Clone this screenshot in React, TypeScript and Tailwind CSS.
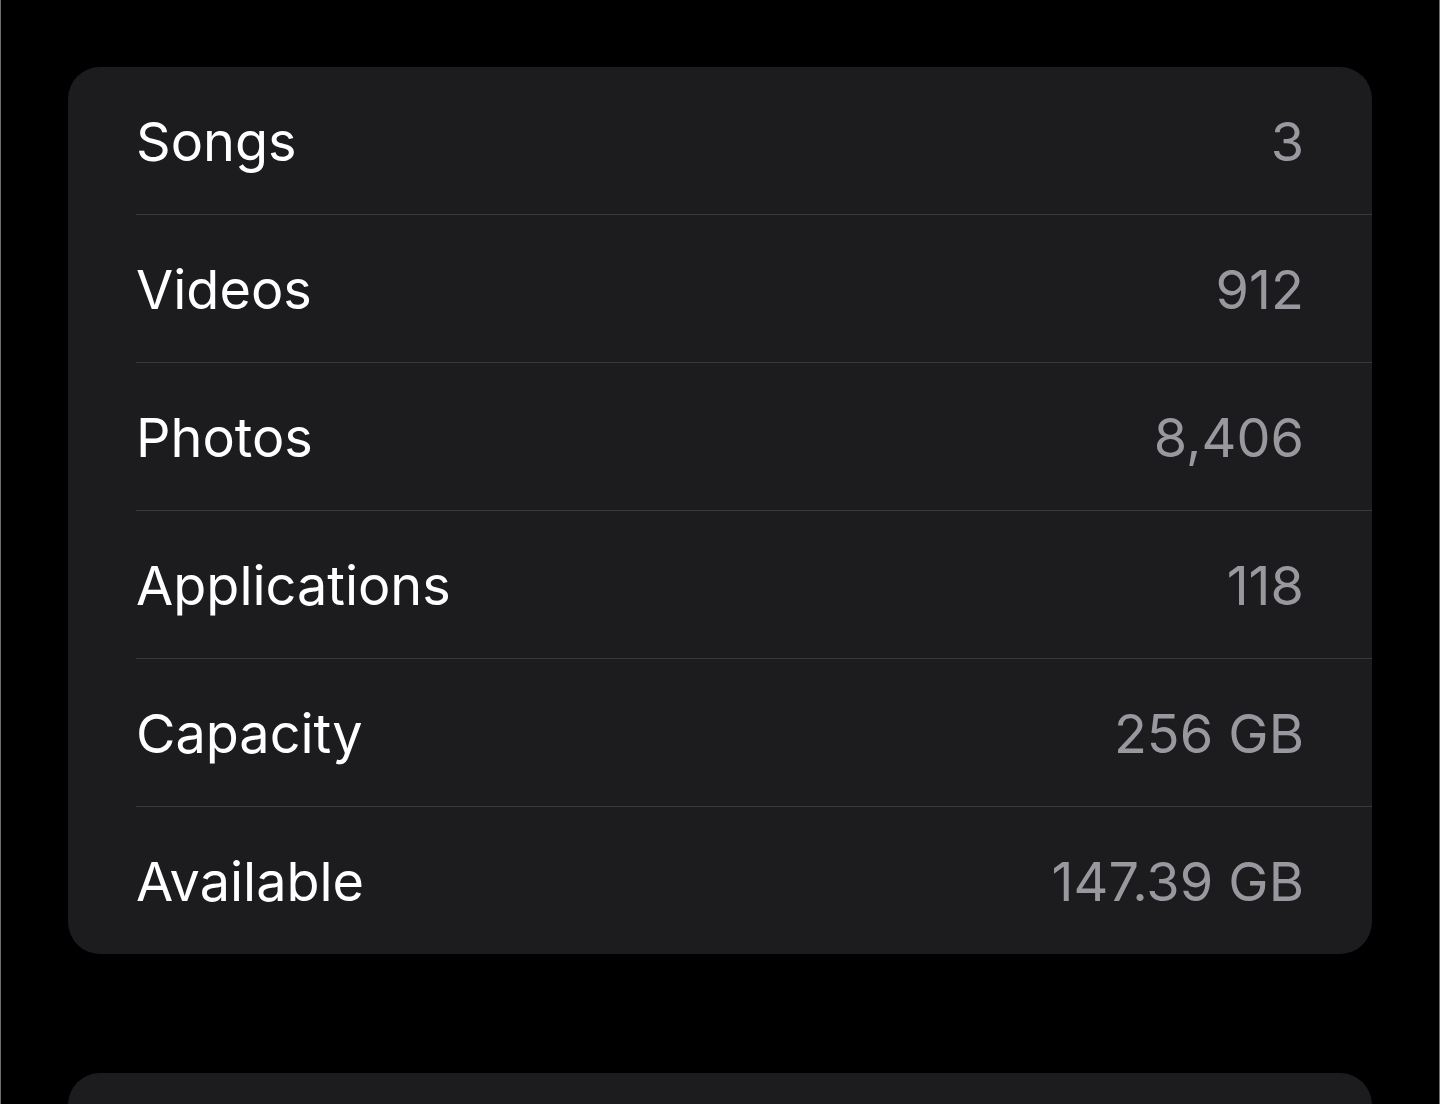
const ROWS: { label: string; value: string }[] = [
  { label: "Songs", value: "3" },
  { label: "Videos", value: "912" },
  { label: "Photos", value: "8,406" },
  { label: "Applications", value: "118" },
  { label: "Capacity", value: "256 GB" },
  { label: "Available", value: "147.39 GB" },
];

export default function App() {
  return (
    <div
      className="h-[1104px] overflow-hidden border-x border-[#6e6e72] bg-black px-[67px] pt-[67px]"
      style={{ fontFamily: "Inter, 'Noto Sans', sans-serif" }}
    >
      <div className="overflow-hidden rounded-[32px] bg-[#1c1c1e]">
        {ROWS.map((row, i) => {
          const last = i === ROWS.length - 1;
          return (
            <div key={row.label} className="pl-[68px]">
              <div
                className={
                  "flex items-center justify-between pr-[68px] " +
                  (last ? "h-[147px]" : "h-[148px] border-b border-[#38383a]")
                }
              >
                <span className="pt-[2px] text-[54px] leading-none text-white">
                  {row.label}
                </span>
                <span className="pt-[2px] text-[54px] leading-none text-[#98989e]">
                  {row.value}
                </span>
              </div>
            </div>
          );
        })}
      </div>
      <div className="mt-[119px] h-[200px] rounded-[32px] bg-[#1c1c1e]" />
    </div>
  );
}
